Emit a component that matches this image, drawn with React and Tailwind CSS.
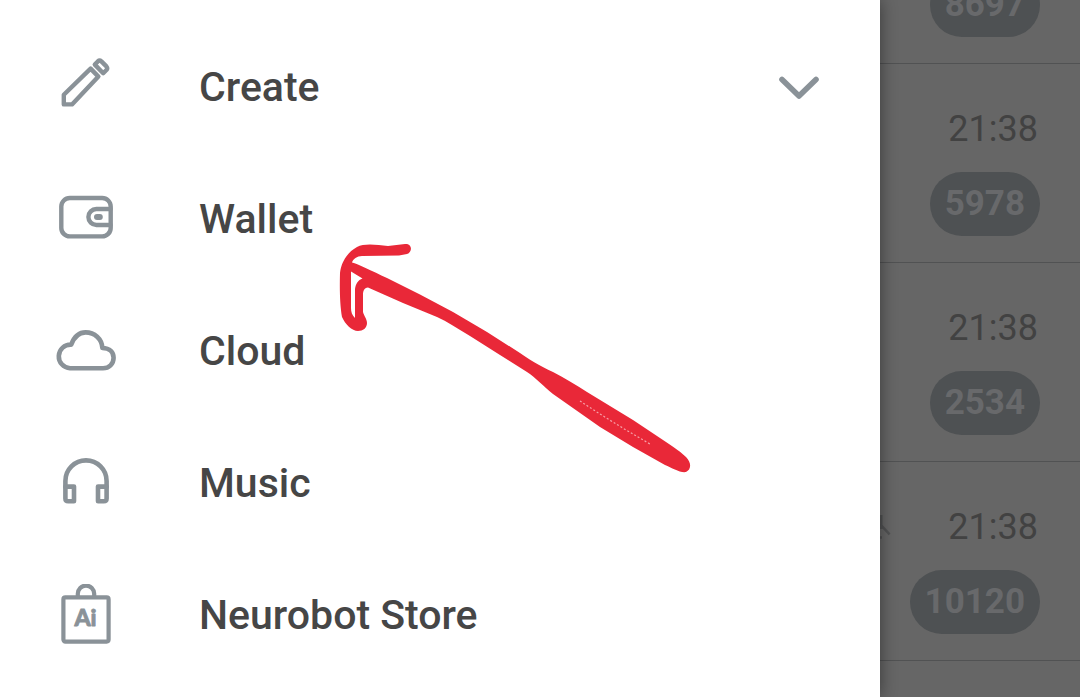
const iconProps = {
  viewBox: "0 0 64 64",
  fill: "none",
  stroke: "#8a9298",
  strokeWidth: 4.6,
  strokeLinecap: "round",
  strokeLinejoin: "round",
  "aria-hidden": true,
  className: "size-16 shrink-0",
};

function PencilIcon() {
  return (
    <svg {...iconProps} strokeWidth="4.4">
      <path d="M9.8 48.4V38.8L36.6 12.6L44.4 20.6L18 48.4Z" />
      <path d="M40.8 8.6L43.8 5.4Q45.6 3.8 47.4 5.4L52.4 10.4Q54 12.2 52.4 14L49.2 17.2Z" />
    </svg>
  );
}

function WalletIcon() {
  return (
    <svg {...iconProps} strokeWidth="4.4">
      <rect x="7.3" y="10" width="49.4" height="38.4" rx="8.5" />
      <path d="M56.5 21H42.4A8 8 0 0 0 42.4 37H56.5" />
      <path d="M43 29H45.8" strokeWidth="6" />
    </svg>
  );
}

function CloudIcon() {
  return (
    <svg {...iconProps} strokeWidth="4.6">
      <path d="M16 48.2A11.8 11.8 0 0 1 17.2 24.6C20.400 16.200 25 12.400 31.600 12.400C40.600 12.400 47.800 18.800 48.400 28C56 28 59.600 32.600 59.600 37.800C59.600 44 55 48.200 49 48.200Z" />
    </svg>
  );
}

function HeadphonesIcon() {
  return (
    <svg {...iconProps} strokeWidth="4.6">
      <path d="M11.4 35V29A20.600 20.600 0 0 1 52.600 29V35" />
      <path d="M11.400 34.600H20V49.200H14.200Q11.400 49.200 11.400 46.400Z" />
      <path d="M52.600 34.600H44V49.200H49.800Q52.600 49.200 52.600 46.400Z" />
    </svg>
  );
}

function StoreIcon() {
  return (
    <svg {...iconProps} strokeWidth="4.2">
      <rect x="9.400" y="13.400" width="45.200" height="44.200" rx="2" />
      <path d="M23.800 13V9.800A8.200 8.200 0 0 1 40.200 9.800V13" />
      <text
        x="31.500"
        y="42.200"
        textAnchor="middle"
        fontSize="23"
        fill="#8a9298"
        strokeWidth="0.800"
        className="font-['Lato',sans-serif] font-black"
      >
        Ai
      </text>
    </svg>
  );
}

const menu = [
  { label: "Create", Icon: PencilIcon, expandable: true },
  { label: "Wallet", Icon: WalletIcon },
  { label: "Cloud", Icon: CloudIcon },
  { label: "Music", Icon: HeadphonesIcon },
  { label: "Neurobot Store", Icon: StoreIcon },
];

const chats = [
  { time: "21:38", unread: "5978" },
  { time: "21:38", unread: "2534" },
  { time: "21:38", unread: "10120", muted: true },
];

function MenuItem({ label, Icon, expandable }) {
  return (
    <li>
      <button type="button" className="flex h-33 w-full items-center pr-[60px] pl-[54px] text-left">
        <Icon />
        <span className="ml-[81px] grow pb-[2px] text-[41px] leading-[48px] font-medium text-[#464646]">{label}</span>
        {expandable && (
          <svg viewBox="0 0 42 24" fill="none" stroke="#8a9298" strokeWidth="5.6" strokeLinecap="round" strokeLinejoin="round" aria-hidden="true" className="h-6 w-[42px]">
            <path d="M4 3.400L21 20L38 3.400" />
          </svg>
        )}
      </button>
    </li>
  );
}

function UnreadBadge({ count }) {
  return (
    <span className="flex h-16 shrink-0 items-center rounded-full bg-[#4e5153] px-[15px] text-[35px] leading-[44px] font-bold text-[#68696b]">
      {count}
    </span>
  );
}

function MutedIcon() {
  return (
    <svg viewBox="0 0 12 32" fill="none" stroke="#515253" strokeWidth="2.400" aria-hidden="true" className="h-8 w-3">
      <path d="M1.300 4V18M0 13L9.600 23.400M0 26.500H2" />
    </svg>
  );
}

function ChatRow({ time, unread, muted }) {
  return (
    <li className="flex h-[199px] flex-col items-end justify-end gap-[21px] border-b border-[#515253] pr-10 pb-[26px]">
      <div className="flex w-full items-center pr-[2px]">
        {muted && <MutedIcon />}
        <span className="ml-auto text-[36px] leading-[44px] text-[#424242]">{time}</span>
      </div>
      <UnreadBadge count={unread} />
    </li>
  );
}

function HandDrawnArrow() {
  return (
    <svg viewBox="330 235 370 245" fill="#e92838" aria-hidden="true" className="pointer-events-none absolute top-[235px] left-[330px] z-20 h-[245px] w-[370px]">
      <path
        fillRule="evenodd"
        d="M405 244C412 243 413 252 407 254L399 255.500L362 256C357 256 353 259 352 262.500C358 264 372 271 387 278L420 294.500L453 312L487 332L520 353C527 358 540 366 553 372C565 378 576 385 587 392L633 420L666 442C674 447 682 453 686 457C692 463 691 470 686 472C680 473 672 468 665 465L633 447L600 427L553 394C543 386 536 378 527 372L500 355L470 336C458 329 448 322 437 317L403 303L368 287.500C364 288 363 291 363 295V312C364 316 367 319 367 323C367 328 363 331 358 331C352 331 345 324 342 317C340 306 339.500 290 340 273C341 264 346 253 357 247C364 243 376 244.500 388 246ZM351 271.500V308C351 312 352 315 355 318V289C355.500 284 358 280 362.500 278.500Z"
      />
      <path d="M580 401Q610 421 650 444" fill="none" stroke="#f6a0a8" strokeWidth="1.200" strokeDasharray="2 2" />
    </svg>
  );
}

export default function App() {
  return (
    <div className="relative flex h-screen overflow-hidden bg-[#666666] font-['Roboto',sans-serif]">
      <nav aria-label="Main menu" className="relative z-10 min-w-0 grow bg-white pt-[22px] shadow-[0_0_16px_rgba(0,0,0,0.45)]">
        <ul>
          {menu.map((item) => (
            <MenuItem key={item.label} {...item} />
          ))}
        </ul>
      </nav>
      <ul aria-label="Chats" className="w-[200px] shrink-0">
        <li className="flex h-16 flex-col items-end justify-end overflow-hidden border-b border-[#515253] pr-10 pb-[26px]">
          <UnreadBadge count="8697" />
        </li>
        {chats.map((chat) => (
          <ChatRow key={chat.unread} {...chat} />
        ))}
      </ul>
      <HandDrawnArrow />
    </div>
  );
}
